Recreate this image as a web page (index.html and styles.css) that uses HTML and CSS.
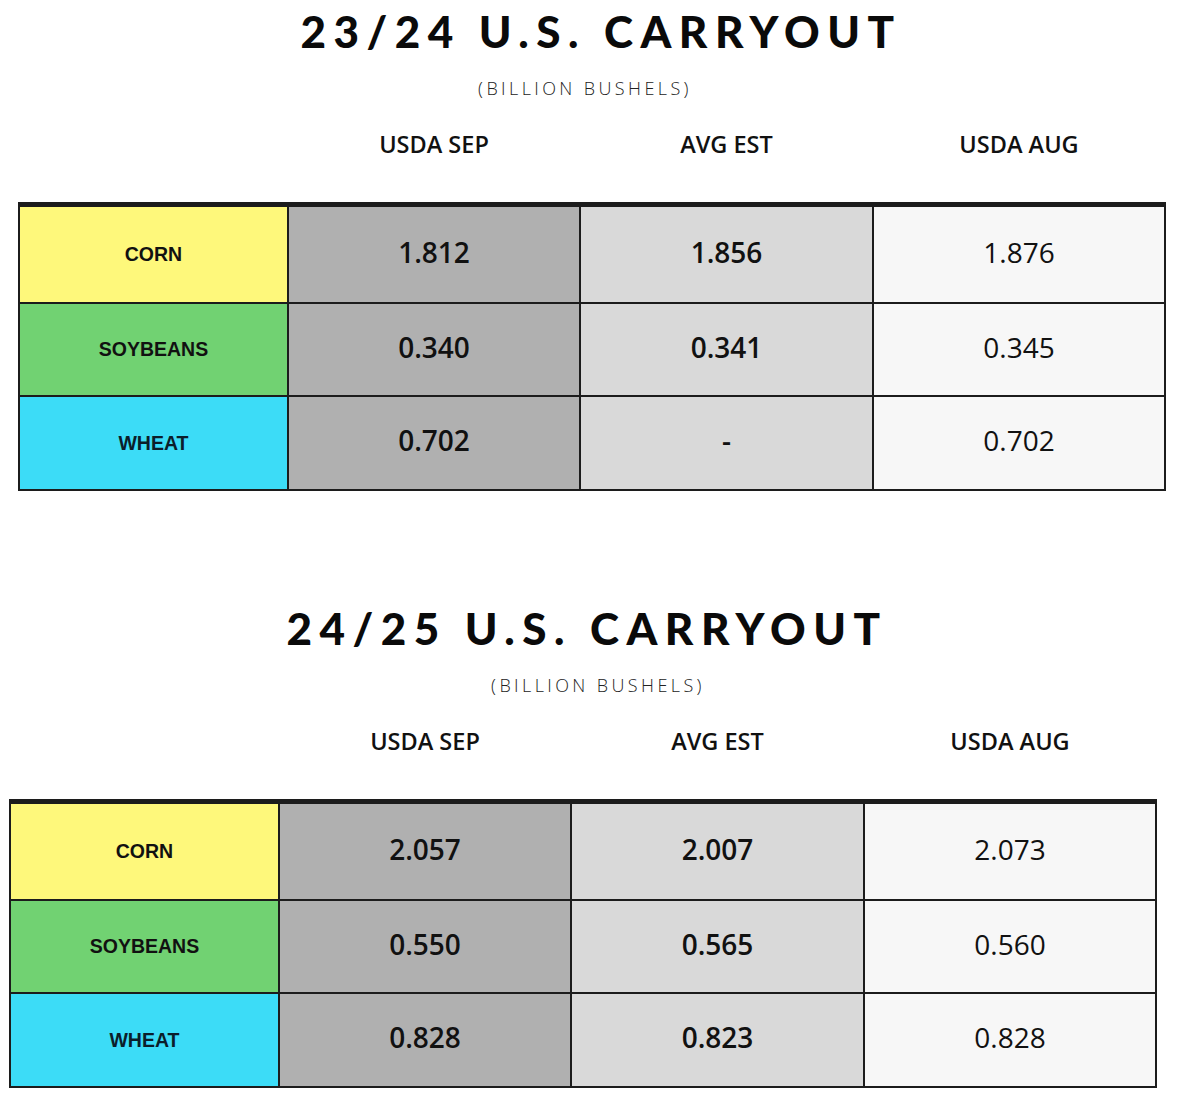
FILE: index.html
```html
<!DOCTYPE html>
<html lang="en">
<head>
<meta charset="utf-8">
<title>U.S. Carryout</title>
<link rel="stylesheet" href="styles.css">
</head>
<body>
<section class="block block-first">
  <h1 class="title title-first">23/24 U.S. CARRYOUT</h1>
  <p class="subtitle subtitle-first">(BILLION BUSHELS)</p>
  <div class="heads">
    <span></span>
    <span class="head">USDA SEP</span>
    <span class="head">AVG EST</span>
    <span class="head">USDA AUG</span>
  </div>
  <div class="grid">
    <div class="cell label corn">CORN</div>
    <div class="cell c1">1.812</div>
    <div class="cell c2">1.856</div>
    <div class="cell c3">1.876</div>
    <div class="cell label soy">SOYBEANS</div>
    <div class="cell c1">0.340</div>
    <div class="cell c2">0.341</div>
    <div class="cell c3">0.345</div>
    <div class="cell label wheat">WHEAT</div>
    <div class="cell c1">0.702</div>
    <div class="cell c2">-</div>
    <div class="cell c3">0.702</div>
  </div>
</section>
<section class="block block-second">
  <h1 class="title title-second">24/25 U.S. CARRYOUT</h1>
  <p class="subtitle subtitle-second">(BILLION BUSHELS)</p>
  <div class="heads">
    <span></span>
    <span class="head">USDA SEP</span>
    <span class="head">AVG EST</span>
    <span class="head">USDA AUG</span>
  </div>
  <div class="grid">
    <div class="cell label corn">CORN</div>
    <div class="cell c1">2.057</div>
    <div class="cell c2">2.007</div>
    <div class="cell c3">2.073</div>
    <div class="cell label soy">SOYBEANS</div>
    <div class="cell c1">0.550</div>
    <div class="cell c2">0.565</div>
    <div class="cell c3">0.560</div>
    <div class="cell label wheat">WHEAT</div>
    <div class="cell c1">0.828</div>
    <div class="cell c2">0.823</div>
    <div class="cell c3">0.828</div>
  </div>
</section>
</body>
</html>
```

FILE: styles.css
```css
html, body {
  margin: 0;
  padding: 0;
  background: #ffffff;
}
body {
  width: 1180px;
  height: 1109px;
  overflow: hidden;
  color: #111111;
  font-family: "Open Sans", "Noto Sans", sans-serif;
}
.block {
  width: 1148px;
}
.block-first {
  height: 597px;
  margin-left: 18px;
}
.block-second {
  margin-left: 9px;
}
.title {
  margin: 0;
  height: 62px;
  line-height: 62px;
  text-align: center;
  font-family: "Lato", "DejaVu Sans", sans-serif;
  font-weight: 900;
  font-size: 44px;
  letter-spacing: 7.5px;
  color: #0a0a0a;
  white-space: nowrap;
  box-sizing: border-box;
}
.title-first {
  padding-left: 18px;
}
.title-second {
  padding-left: 8px;
}
.subtitle {
  margin: 0;
  height: 53px;
  line-height: 53px;
  text-align: center;
  font-family: "Open Sans", sans-serif;
  font-weight: 300;
  font-size: 18px;
  letter-spacing: 3.4px;
  color: #222222;
  box-sizing: border-box;
}
.subtitle-first {
  padding-right: 14px;
}
.subtitle-second {
  padding-left: 30px;
}
.heads {
  display: grid;
  grid-template-columns: 267px 290px 291px 290px;
  column-gap: 2px;
  padding: 0 2px;
  height: 60px;
  line-height: 58px;
  margin-bottom: 27px;
}
.head {
  text-align: center;
  font-family: "Open Sans", sans-serif;
  font-weight: 600;
  font-size: 23.5px;
  color: #111111;
}
.grid {
  display: grid;
  grid-template-columns: 267px 290px 291px 290px;
  grid-template-rows: 95px 91px 92px;
  gap: 2px;
  padding: 5px 2px 2px 2px;
  background: #1c1c1c;
  width: 1148px;
  box-sizing: border-box;
}
.cell {
  display: flex;
  align-items: center;
  justify-content: center;
  padding-bottom: 6px;
  box-sizing: border-box;
  font-family: "Open Sans", sans-serif;
  font-size: 28px;
  color: #111111;
}
.label {
  padding-bottom: 0;
  font-family: "Liberation Sans", Arial, sans-serif;
  font-weight: bold;
  font-size: 19.5px;
}
.corn { background: #fef87b; }
.soy { background: #71d272; }
.wheat { background: #3cdcf7; color: #0b1e2a; }
.c1 { background: #b0b0b0; font-weight: 600; }
.c2 { background: #d9d9d9; font-weight: 600; }
.c3 { background: #f7f7f7; font-weight: 400; }
```
